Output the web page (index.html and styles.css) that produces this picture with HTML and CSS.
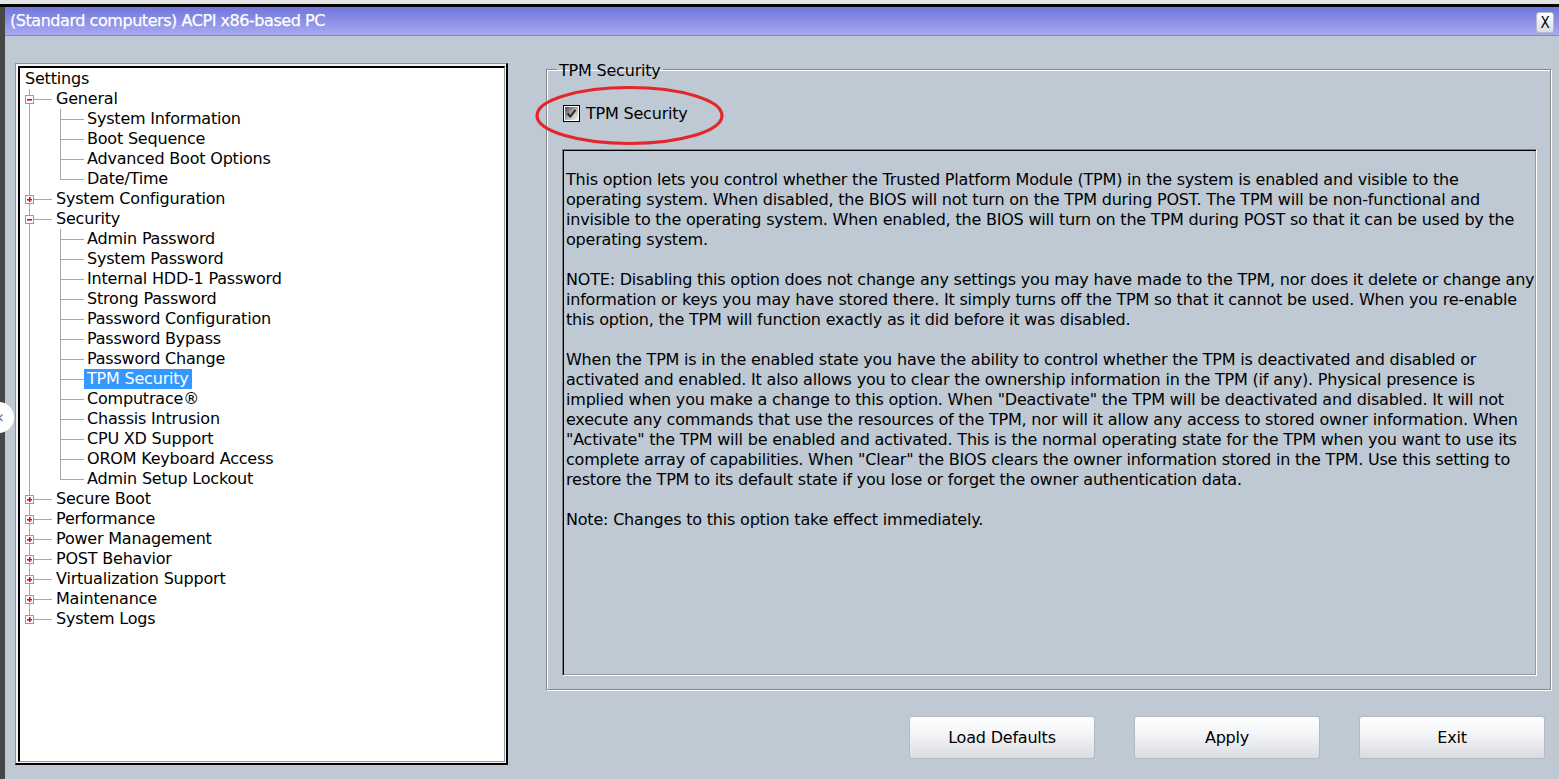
FILE: index.html
```html
<!DOCTYPE html>
<html>
<head>
<meta charset="utf-8">
<title>(Standard computers) ACPI x86-based PC</title>
<link rel="stylesheet" href="styles.css">
</head>
<body>
<div class="top-edge"></div>
<div class="frame">
  <div class="left-edge"></div>
  <div class="window">
    <div class="titlebar">
      <span class="title">(Standard computers) ACPI x86-based PC</span>
      <button class="close">X</button>
    </div>
    <div class="content">
      <div class="tree-frame">
        <div class="tree">
          <div class="row root"><span class="label">Settings</span></div>
          <div class="row l1"><span class="exp minus"></span><span class="label">General</span></div>
          <div class="row l2"><span class="label">System Information</span></div>
          <div class="row l2"><span class="label">Boot Sequence</span></div>
          <div class="row l2"><span class="label">Advanced Boot Options</span></div>
          <div class="row l2 last"><span class="label">Date/Time</span></div>
          <div class="row l1"><span class="exp plus"></span><span class="label">System Configuration</span></div>
          <div class="row l1"><span class="exp minus"></span><span class="label">Security</span></div>
          <div class="row l2"><span class="label">Admin Password</span></div>
          <div class="row l2"><span class="label">System Password</span></div>
          <div class="row l2"><span class="label">Internal HDD-1 Password</span></div>
          <div class="row l2"><span class="label">Strong Password</span></div>
          <div class="row l2"><span class="label">Password Configuration</span></div>
          <div class="row l2"><span class="label">Password Bypass</span></div>
          <div class="row l2"><span class="label">Password Change</span></div>
          <div class="row l2"><span class="label selected">TPM Security</span></div>
          <div class="row l2"><span class="label">Computrace®</span></div>
          <div class="row l2"><span class="label">Chassis Intrusion</span></div>
          <div class="row l2"><span class="label">CPU XD Support</span></div>
          <div class="row l2"><span class="label">OROM Keyboard Access</span></div>
          <div class="row l2 last"><span class="label">Admin Setup Lockout</span></div>
          <div class="row l1"><span class="exp plus"></span><span class="label">Secure Boot</span></div>
          <div class="row l1"><span class="exp plus"></span><span class="label">Performance</span></div>
          <div class="row l1"><span class="exp plus"></span><span class="label">Power Management</span></div>
          <div class="row l1"><span class="exp plus"></span><span class="label">POST Behavior</span></div>
          <div class="row l1"><span class="exp plus"></span><span class="label">Virtualization Support</span></div>
          <div class="row l1"><span class="exp plus"></span><span class="label">Maintenance</span></div>
          <div class="row l1 last"><span class="exp plus"></span><span class="label">System Logs</span></div>
        </div>
      </div>
      <div class="right">
        <fieldset class="group">
          <legend>TPM Security</legend>
          <div class="check-row">
            <svg class="checkbox" width="17" height="17" viewBox="0 0 17 17">
              <defs>
                <linearGradient id="cbg" x1="0" y1="0" x2="1" y2="1">
                  <stop offset="0" stop-color="#4a4a4a"/>
                  <stop offset="0.55" stop-color="#b8b8b8"/>
                  <stop offset="1" stop-color="#f4f4f4"/>
                </linearGradient>
              </defs>
              <rect x="0.5" y="0.5" width="16" height="16" fill="#fff" stroke="#000"/>
              <rect x="2" y="2" width="13" height="13" fill="url(#cbg)"/>
              <path d="M4.5 8.5 L7.3 11.5 L12.5 4.8" fill="none" stroke="#2a2a2a" stroke-width="2"/>
            </svg>
            <span class="check-label">TPM Security</span>
            <svg class="annotation" width="191" height="61" viewBox="0 0 191 61"><ellipse cx="95.5" cy="30.5" rx="92.5" ry="28" fill="none" stroke="#e3262b" stroke-width="3.2"/></svg>
          </div>
          <div class="desc">
            <p>This option lets you control whether the Trusted Platform Module (TPM) in the system is enabled and visible to the<br>operating system. When disabled, the BIOS will not turn on the TPM during POST. The TPM will be non-functional and<br>invisible to the operating system. When enabled, the BIOS will turn on the TPM during POST so that it can be used by the<br>operating system.</p>
            <p>NOTE: Disabling this option does not change any settings you may have made to the TPM, nor does it delete or change any<br>information or keys you may have stored there. It simply turns off the TPM so that it cannot be used. When you re-enable<br>this option, the TPM will function exactly as it did before it was disabled.</p>
            <p>When the TPM is in the enabled state you have the ability to control whether the TPM is deactivated and disabled or<br>activated and enabled. It also allows you to clear the ownership information in the TPM (if any). Physical presence is<br>implied when you make a change to this option. When "Deactivate" the TPM will be deactivated and disabled. It will not<br>execute any commands that use the resources of the TPM, nor will it allow any access to stored owner information. When<br>"Activate" the TPM will be enabled and activated. This is the normal operating state for the TPM when you want to use its<br>complete array of capabilities. When "Clear" the BIOS clears the owner information stored in the TPM. Use this setting to<br>restore the TPM to its default state if you lose or forget the owner authentication data.</p>
            <p>Note: Changes to this option take effect immediately.</p>
          </div>
        </fieldset>
        <div class="buttons">
          <button class="btn">Load Defaults</button>
          <button class="btn">Apply</button>
          <button class="btn">Exit</button>
        </div>
      </div>
    </div>
  </div>
</div>
<div class="side-handle"><span>&#8249;</span></div>
</body>
</html>
```
FILE: styles.css
```css
* { box-sizing: border-box; }
html, body {
  margin: 0;
  padding: 0;
  height: 100%;
  overflow: hidden;
}
body {
  font-family: "DejaVu Sans", sans-serif;
  font-size: 16px;
  letter-spacing: -0.2px;
  line-height: 20px;
  color: #000;
  background: #bec9d4;
  display: flex;
  flex-direction: column;
}
.top-edge {
  height: 7px;
  background: #e4e4e4;
  border-bottom: 3px solid #050505;
  flex: none;
}
.frame {
  flex: 1;
  display: flex;
  min-height: 0;
}
.left-edge {
  width: 5px;
  background: #474747;
  flex: none;
}
.window {
  flex: 1;
  min-width: 0;
  display: flex;
  flex-direction: column;
  background: #bec9d4;
}
.titlebar {
  height: 29px;
  flex: none;
  background: linear-gradient(#7076dd, #a7aaf0);
  border-bottom: 1px solid #7b80ee;
  display: flex;
  align-items: center;
  justify-content: space-between;
  padding: 0 5px 0 5px;
}
.title {
  color: #fff;
  font-size: 16px;
  letter-spacing: -0.45px;
  -webkit-text-stroke: 0.25px #fff;
}
.close {
  width: 18px;
  height: 21px;
  padding: 0;
  margin-top: 3px;
  border: 1px solid #b8bcc8;
  border-radius: 3px;
  background: linear-gradient(#ffffff, #dcdde2);
  font-family: "DejaVu Sans Condensed", sans-serif;
  font-size: 15px;
  color: #000;
  line-height: 18px;
}
.content {
  flex: 1;
  display: grid;
  grid-template-columns: 493px minmax(0, 1fr);
  column-gap: 38px;
  align-items: start;
  padding: 22px 8px 0 10px;
}
.tree-frame {
  margin-top: 5px;
  height: 702px;
  border-style: solid;
  border-width: 1px 2px 2px 1px;
  border-color: #8f8f8f #000 #000 #8f8f8f;
  padding: 2px 1px 1px 2px;
  background: #f4f4f4;
}
.tree {
  height: 100%;
  background: #fff;
  border-style: solid;
  border-width: 2px 1px 1px 2px;
  border-color: #000 #9a9a9a #9a9a9a #000;
  padding: 1px 0 0 1px;
}
.row {
  height: 20px;
  display: flex;
  align-items: center;
  white-space: nowrap;
  background-repeat: no-repeat;
}
.label {
  padding: 0 3px;
  line-height: 20px;
}
.root { padding-left: 1px; }
.l1 {
  padding-left: 4px;
  background-image:
    linear-gradient(#a8a8a8, #a8a8a8),
    linear-gradient(#a8a8a8, #a8a8a8);
  background-position: 8px 0, 13px 10px;
  background-size: 1px 100%, 18px 1px;
}
.l1.last { background-size: 1px 10px, 18px 1px; }
.exp {
  flex: none;
  align-self: flex-start;
  margin-top: 6px;
  width: 9px;
  height: 9px;
  margin-right: 19px;
  border: 1px solid #9a9a9a;
  background-color: #fff;
  background-repeat: no-repeat;
}
.exp.minus {
  background-image:
    linear-gradient(#f00010, #f00010),
    linear-gradient(#f36a70, #f36a70);
  background-position: 1px 3px, 1px 4px;
  background-size: 5px 1px, 5px 1px;
}
.exp.plus {
  background-image:
    linear-gradient(#f00010, #f00010),
    linear-gradient(#f00010, #f00010),
    linear-gradient(#f36a70, #f36a70),
    linear-gradient(#f36a70, #f36a70);
  background-position: 1px 3px, 3px 1px, 1px 4px, 4px 1px;
  background-size: 5px 1px, 1px 5px, 5px 1px, 1px 5px;
}
.l2 {
  padding-left: 63px;
  background-image:
    linear-gradient(#a8a8a8, #a8a8a8),
    linear-gradient(#a8a8a8, #a8a8a8),
    linear-gradient(#a8a8a8, #a8a8a8);
  background-position: 8px 0, 39px 0, 39px 10px;
  background-size: 1px 100%, 1px 100%, 24px 1px;
}
.l2.last { background-size: 1px 100%, 1px 10px, 24px 1px; }
.selected {
  background: #3399ff;
  color: #fff;
}
.right {
  display: flex;
  flex-direction: column;
  min-width: 0;
}
.group {
  margin: 0;
  height: 632px;
  padding: 25px 13px 14px 15px;
  border: 1px solid #888;
  box-shadow: inset 1px 1px 0 #fff, 1px 1px 0 #fff;
  min-width: 0;
}
.group legend {
  padding: 3px 2px 0;
  margin-left: -5px;
  line-height: 20px;
}
.check-row {
  position: relative;
  height: 20px;
  display: flex;
  align-items: center;
  gap: 6px;
  padding-left: 1px;
  margin-top: -2px;
}
.checkbox {
  flex: none;
  align-self: flex-start;
  margin-top: 1px;
}
.annotation {
  position: absolute;
  left: -28px;
  top: -19px;
}
.desc {
  margin-top: 25px;
  height: 527px;
  border-style: solid;
  border-width: 1px;
  border-color: #808080 #fff #fff #808080;
  box-shadow: inset 1px 1px 0 #000, inset -1px -1px 0 #9a9a9a;
  padding: 20px 4px 0 3px;
  white-space: nowrap;
  overflow: hidden;
}
.desc p {
  margin: 0 0 20px;
}
.buttons {
  display: flex;
  justify-content: flex-end;
  gap: 39px;
  margin-top: 26px;
  padding-right: 6px;
}
.btn {
  width: 186px;
  height: 43px;
  border: 1px solid #b4b9c2;
  border-radius: 3px;
  background: linear-gradient(#ffffff 0%, #f4f5f7 40%, #d9dce1 100%);
  font-family: "DejaVu Sans", sans-serif;
  letter-spacing: -0.2px;
  font-size: 16px;
  color: #000;
}
.side-handle {
  position: absolute;
  left: -17px;
  top: 402px;
  width: 31px;
  height: 31px;
  border-radius: 50%;
  background: #fff;
  color: #777;
  font-size: 18px;
  line-height: 30px;
  text-align: right;
  padding-right: 10px;
}
```
